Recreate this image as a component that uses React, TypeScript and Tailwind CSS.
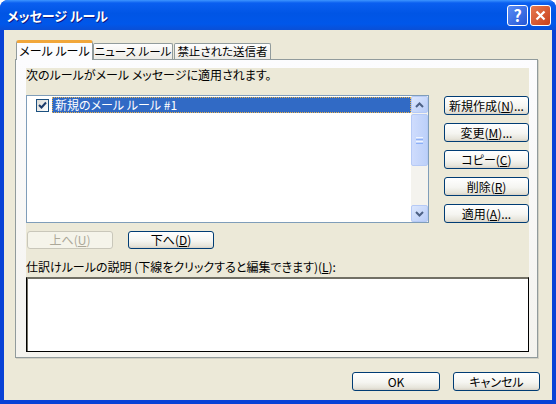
import type { ReactNode } from 'react'

const jp = "font-['Noto_Sans_CJK_JP',sans-serif] [font-feature-settings:'palt']"

function U({ children }: { children: ReactNode }) {
  return <span className="underline underline-offset-[1px]">{children}</span>
}

function Btn({ children, className = '', disabled = false }: { children: ReactNode; className?: string; disabled?: boolean }) {
  return (
    <div
      className={`flex shrink-0 items-center justify-center rounded-[3px] border text-[12px] leading-none ${
        disabled
          ? 'border-[#C9C7BA] bg-[#F5F4EA] text-[#ACA899]'
          : 'border-[#003C74] bg-[linear-gradient(180deg,#ffffff_0%,#f5f5f1_55%,#e6e4da_88%,#d6d0c5_100%)] text-black'
      } ${className}`}
    >
      {children}
    </div>
  )
}

function Tab({ label, active = false, w }: { label: string; active?: boolean; w: string }) {
  if (active)
    return (
      <div className={`flex h-[20px] ${w} shrink-0 items-start justify-center rounded-t-[3px] border-x border-t-[3px] border-x-[#919B9C] border-t-[#F1A63A] bg-[#FCFCFE] pt-[1px] text-[12px] leading-[14px]`}>
        {label}
      </div>
    )
  return (
    <div className={`mb-[1px] flex h-[16px] ${w} shrink-0 items-center justify-center rounded-t-[2px] border-x border-t border-[#919B9C] bg-[linear-gradient(180deg,#fefefe,#ecebe6)] text-[11.5px] leading-none`}>
      {label}
    </div>
  )
}

function ScrollBtn({ up }: { up?: boolean }) {
  return (
    <div className="flex h-[17px] w-[17px] items-center justify-center rounded-[2px] border border-[#B6CAF6] bg-[linear-gradient(135deg,#dce7fd,#b9cdf8)]">
      <svg width="9" height="6" viewBox="0 0 9 6">
        <path d={up ? 'M1 5 L4.5 1.5 L8 5' : 'M1 1 L4.5 4.5 L8 1'} fill="none" stroke="#4D6185" strokeWidth="2" />
      </svg>
    </div>
  )
}

export default function App() {
  return (
    <div className={`h-[404px] w-[556px] whitespace-nowrap bg-white text-black ${jp}`}>
      <div className="flex h-full flex-col rounded-t-[8px] bg-[#0842D6] px-[4px] pb-[4px]">
        {/* title bar */}
        <div className="-mx-[4px] flex h-[30px] items-center rounded-t-[8px] bg-[linear-gradient(180deg,#3D95FF_0%,#0A5FF0_10%,#0055E5_45%,#0057EA_80%,#0A4FD6_100%)] pl-[7px] pr-[5px]">
          <div className="flex-1 text-[13px] font-bold leading-none text-white [text-shadow:1px_1px_#0A1883]">メッセージ ルール</div>
          <div className="flex gap-[2px]">
            <div className="flex h-[21px] w-[21px] items-center justify-center rounded-[3px] border border-white bg-[linear-gradient(135deg,#5A8CF5,#2457D6)] text-[16px] font-bold leading-none text-white">?</div>
            <div className="flex h-[21px] w-[21px] items-center justify-center rounded-[3px] border border-white bg-[linear-gradient(135deg,#E7794F,#C8401C)]">
              <svg width="11" height="11" viewBox="0 0 11 11">
                <path d="M1.5 1.5 L9.5 9.5 M9.5 1.5 L1.5 9.5" stroke="white" strokeWidth="2.2" />
              </svg>
            </div>
          </div>
        </div>

        {/* body */}
        <div className="flex flex-1 flex-col bg-[#ECE9D8] px-[11px] pt-[10px]">
          <div className="relative z-10 -mb-[1px] ml-[1px] flex items-end">
            <Tab label="メール ルール" active w="w-[77px]" />
            <Tab label="ニュース ルール" w="w-[80px]" />
            <div className="w-[1px]" />
            <Tab label="禁止された送信者" w="w-[97px]" />
          </div>

          <div className="h-[299px] w-[523px] border border-[#919B9C] bg-[linear-gradient(180deg,#FCFCFE,#F4F3EE)] pl-[10px] pt-[8px] shadow-[1px_1px_0_#D2D0C4]">
            <div className="flex h-[209px] w-[503px] flex-col bg-[#ECE9D8]">
              <div className="h-[14px] text-[12px] leading-[14px]">次のルールがメール メッセージに適用されます。</div>

              <div className="mt-[13px] flex">
                <div className="flex h-[128px] w-[403px] border border-[#7F9DB9] bg-white">
                  <div className="flex-1 pl-[9px] pt-[1px]">
                    <div className="flex items-center gap-[3px]">
                      <div className="flex h-[13px] w-[13px] items-center justify-center border border-[#1C5180] bg-[linear-gradient(135deg,#DCDBD5,#FFFFFF)]">
                        <svg width="9" height="9" viewBox="0 0 9 9">
                          <path d="M1 4 L3.5 6.5 L8 1.5" fill="none" stroke="#1D3B6A" strokeWidth="2" />
                        </svg>
                      </div>
                      <div className="flex h-[16px] flex-1 items-center border border-dotted border-[#E8B24C] bg-[#316AC5] pl-[2px] text-[12px] leading-none text-white">
                        新規のメール ルール #1
                      </div>
                    </div>
                  </div>
                  <div className="flex w-[17px] flex-col bg-[#F4F3EE]">
                    <ScrollBtn up />
                    <div className="mt-[1px] flex h-[52px] w-[17px] items-center justify-center rounded-[2px] border border-[#B6CAF6] bg-[linear-gradient(90deg,#CFDCFD,#BCD0F9)]">
                      <div className="flex flex-col gap-[1px]">
                        <div className="h-[1px] w-[7px] bg-[#EEF4FE]" />
                        <div className="h-[1px] w-[7px] bg-[#8CB0F8]" />
                        <div className="h-[1px] w-[7px] bg-[#EEF4FE]" />
                        <div className="h-[1px] w-[7px] bg-[#8CB0F8]" />
                      </div>
                    </div>
                    <div className="flex-1" />
                    <ScrollBtn />
                  </div>
                </div>

                <div className="ml-[15px] mt-[1px] flex flex-col gap-[8px]">
                  <Btn className="h-[19px] w-[85px]">新規作成(<U>N</U>)...</Btn>
                  <Btn className="h-[19px] w-[85px]">変更(<U>M</U>)...</Btn>
                  <Btn className="h-[19px] w-[85px]">コピー(<U>C</U>)</Btn>
                  <Btn className="h-[19px] w-[85px]">削除(<U>R</U>)</Btn>
                  <Btn className="h-[19px] w-[85px]">適用(<U>A</U>)...</Btn>
                </div>
              </div>

              <div className="ml-[1px] mt-[8px] flex gap-[15px]">
                <Btn disabled className="h-[18px] w-[86px]">上へ(<U>U</U>)</Btn>
                <Btn className="h-[18px] w-[86px]">下へ(<U>D</U>)</Btn>
              </div>

              <div className="mt-[11px] h-[14px] text-[12px] leading-[14px]">
                仕訳けルールの説明 (下線をクリックすると編集できます)(<U>L</U>):
              </div>
            </div>

            <div className="h-[75px] w-[503px] border border-black border-t-[#716F64] shadow-[inset_1px_1px_0_#716F64] bg-white" />
          </div>

          <div className="mr-[1px] mt-[14px] flex justify-end gap-[13px]">
            <Btn className="h-[19px] w-[88px]">OK</Btn>
            <Btn className="h-[19px] w-[87px]">キャンセル</Btn>
          </div>
        </div>
      </div>
    </div>
  )
}
